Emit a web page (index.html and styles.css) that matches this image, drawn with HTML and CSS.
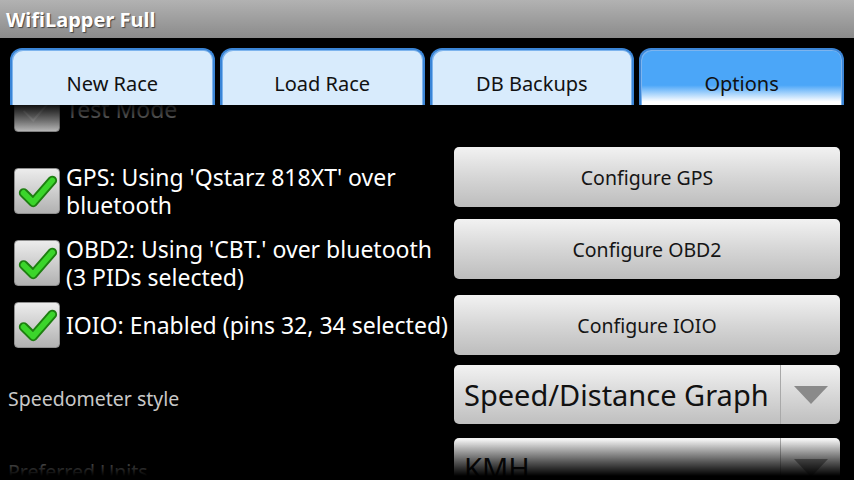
FILE: index.html
```html
<!DOCTYPE html>
<html>
<head>
	<title>WifiLapper Full</title>
	<link rel="stylesheet" href="styles.css">
</head>
<body>
	<div class="titlebar"><span class="title">WifiLapper Full</span></div>
	<div class="tabs">
		<div class="tab">New Race</div>
		<div class="tab">Load Race</div>
		<div class="tab">DB Backups</div>
		<div class="tab active">Options</div>
	</div>
	<div class="content">
		<div class="list">
			<div class="row row-test">
				<div class="opt">
					<span class="check dim"><svg viewBox="0 0 46 46"><polyline class="tick-faint" points="9,25 19,35 39,12"/></svg></span>
					<span class="opt-text dim-text">Test Mode</span>
				</div>
			</div>
			<div class="row">
				<div class="opt opt-two">
					<span class="check"><svg viewBox="0 0 46 46"><polyline class="tick-edge" points="9,25 19,35 39,12"/><polyline class="tick" points="9,25 19,35 39,12"/></svg></span>
					<span class="opt-text">GPS: Using 'Qstarz 818XT' over<br>bluetooth</span>
				</div>
				<div class="btn">Configure GPS</div>
			</div>
			<div class="row">
				<div class="opt opt-two">
					<span class="check"><svg viewBox="0 0 46 46"><polyline class="tick-edge" points="9,25 19,35 39,12"/><polyline class="tick" points="9,25 19,35 39,12"/></svg></span>
					<span class="opt-text">OBD2: Using 'CBT.' over bluetooth<br>(3 PIDs selected)</span>
				</div>
				<div class="btn">Configure OBD2</div>
			</div>
			<div class="row row-one">
				<div class="opt">
					<span class="check"><svg viewBox="0 0 46 46"><polyline class="tick-edge" points="9,25 19,35 39,12"/><polyline class="tick" points="9,25 19,35 39,12"/></svg></span>
					<span class="opt-text">IOIO: Enabled (pins 32, 34 selected)</span>
				</div>
				<div class="btn">Configure IOIO</div>
			</div>
			<div class="row row-spin">
				<div class="field-label">Speedometer style</div>
				<div class="spinner">
					<span class="spinner-text">Speed/Distance Graph</span>
					<span class="spinner-arrow"><svg viewBox="0 0 34 18"><polygon points="0,0 34,0 17,18"/></svg></span>
				</div>
			</div>
			<div class="row row-spin row-units">
				<div class="field-label">Preferred Units</div>
				<div class="spinner">
					<span class="spinner-text">KMH</span>
					<span class="spinner-arrow"><svg viewBox="0 0 34 18"><polygon points="0,0 34,0 17,18"/></svg></span>
				</div>
			</div>
		</div>
	</div>
</body>
</html>
```

FILE: styles.css
```css
html, body {
	margin: 0;
	padding: 0;
	background: #000;
	font-family: "Noto Sans", "Open Sans", "DejaVu Sans", sans-serif;
	width: 854px;
	height: 480px;
	overflow: hidden;
}
.titlebar {
	height: 38px;
	padding-left: 6px;
	background: linear-gradient(#b2b2b2, #8b8b8b);
	display: flex;
	align-items: center;
}
.title {
	color: #fff;
	font-weight: bold;
	font-size: 20px;
	text-shadow: 1px 1px 1px #444;
}
.tabs {
	display: flex;
	gap: 5px;
	padding: 10px 10px 0 10px;
	height: 57px;
}
.tab {
	flex: 1;
	box-sizing: border-box;
	height: 57px;
	padding-top: 20px;
	text-align: center;
	font-size: 20px;
	color: #111;
	background: #d8ebfc;
	border: 2px solid #3b85d6;
	border-bottom: none;
	border-radius: 12px 12px 0 0;
	box-shadow: inset 1px 1px 0 #7db4ee, inset -1px 0 0 #7db4ee;
}
.tab.active {
	background: linear-gradient(#4ba6f8 0, #4ba6f8 64%, #ffffff 94%);
}
.content {
	position: relative;
	height: 375px;
	overflow: hidden;
}
.content::before, .content::after {
	content: "";
	position: absolute;
	left: 0;
	right: 0;
	pointer-events: none;
}
.content::before {
	top: 0;
	height: 30px;
	background: linear-gradient(rgba(0,0,0,0.9), rgba(0,0,0,0));
}
.content::after {
	bottom: 0;
	height: 40px;
	background: linear-gradient(rgba(0,0,0,0), rgba(0,0,0,1) 90%);
}
.list {
	margin-top: -19px;
}
.row {
	display: grid;
	grid-template-columns: 450px 386px;
	column-gap: 4px;
	align-items: start;
}
.row-test {
	height: 46px;
	margin-bottom: 15px;
}
.row-one {
	margin-top: 4px;
	align-items: center;
}
.opt {
	display: flex;
	align-items: center;
	gap: 6px;
	padding-left: 14px;
}
.opt-two {
	margin-top: 16px;
}
.check {
	flex: none;
	width: 46px;
	height: 46px;
	box-sizing: border-box;
	border-radius: 4px;
	border: 1px solid #8e8e8e;
	background: linear-gradient(#ececec, #b1b1b1);
}
.check svg {
	display: block;
	width: 44px;
	height: 44px;
}
.tick-edge {
	fill: none;
	stroke: #1d7f10;
	stroke-width: 10;
	stroke-linecap: round;
	stroke-linejoin: round;
}
.tick {
	fill: none;
	stroke: #3bd52b;
	stroke-width: 6;
	stroke-linecap: round;
	stroke-linejoin: round;
}
.tick-faint {
	fill: none;
	stroke: #d8d8d8;
	stroke-width: 2;
}
.check.dim {
	background: linear-gradient(#9a9a9a, #cfcfcf);
}
.opt-text {
	color: #fff;
	font-size: 23px;
	line-height: 28px;
	white-space: nowrap;
}
.dim-text {
	color: #aaa;
}
.btn {
	height: 60px;
	box-sizing: border-box;
	border-radius: 5px;
	background: linear-gradient(#f2f2f2, #d6d6d6 50%, #bdbdbd);
	color: #151515;
	font-size: 19.5px;
	display: flex;
	align-items: center;
	justify-content: center;
}
.row-spin {
	margin-top: 10px;
	align-items: center;
}
.row-units {
	margin-top: 14px;
}
.field-label {
	padding-left: 8px;
	padding-top: 7px;
	color: #c8c8c8;
	font-size: 19.5px;
}
.spinner {
	height: 59px;
	border-radius: 5px;
	background: linear-gradient(#f2f2f2, #d8d8d8 50%, #bfbfbf);
	display: flex;
	align-items: center;
}
.spinner-text {
	flex: 1;
	padding-left: 10px;
	font-size: 29px;
	color: #111;
}
.spinner-arrow {
	width: 59px;
	height: 59px;
	border-left: 1px solid #a9a9a9;
	display: flex;
	align-items: center;
	justify-content: center;
}
.spinner-arrow svg {
	width: 34px;
	height: 18px;
	fill: #8a8a8a;
}
```
